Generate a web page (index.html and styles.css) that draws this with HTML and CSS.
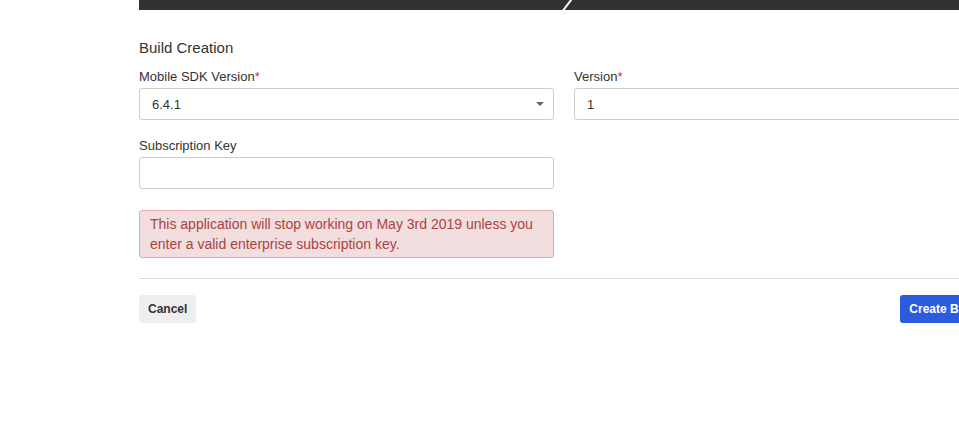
FILE: index.html
```html
<!DOCTYPE html>
<html lang="en">
<head>
<meta charset="utf-8">
<title>Build Creation</title>
<link rel="stylesheet" href="styles.css">
</head>
<body>
<div class="page">
  <div class="topbar">
    <svg class="slash" width="12" height="10" viewBox="0 0 12 10"><line x1="1" y1="10.5" x2="9.5" y2="-0.5" stroke="#ffffff" stroke-width="2"/></svg>
  </div>
  <h2 class="title">Build Creation</h2>
  <div class="grid">
    <div class="field">
      <label class="label">Mobile SDK Version<span class="req">*</span></label>
      <div class="select">
        <span>6.4.1</span>
        <svg class="caret" width="8" height="4" viewBox="0 0 8 4"><path d="M0 0 H8 L4 4 Z" fill="#666"/></svg>
      </div>
    </div>
    <div class="field">
      <label class="label">Version<span class="req">*</span></label>
      <input class="input" type="text" value="1">
    </div>
    <div class="field">
      <label class="label">Subscription Key</label>
      <input class="input" type="text" value="">
    </div>
    <div class="field"></div>
  </div>
  <div class="grid">
    <div class="alert">This application will stop working on May 3rd 2019 unless you enter a valid enterprise subscription key.</div>
  </div>
  <hr class="rule">
  <div class="actions">
    <button class="btn btn-default" type="button">Cancel</button>
    <button class="btn btn-primary" type="button">Create Build</button>
  </div>
</div>
</body>
</html>
```
FILE: styles.css
```css
html, body {
  margin: 0;
  padding: 0;
  overflow: hidden;
  background: #ffffff;
}
body {
  font-family: "Liberation Sans", Arial, sans-serif;
  color: #333333;
}
.page {
  width: 850px;
  margin-left: 139px;
}
.topbar {
  height: 10px;
  background: #313131;
  padding-left: 423px;
  display: flex;
  align-items: flex-start;
}
.slash {
  display: block;
}
.title {
  margin: 28px 0 0 0;
  font-size: 15px;
  font-weight: normal;
  line-height: 20px;
  color: #333333;
}
.grid {
  display: grid;
  grid-template-columns: 415px 415px;
  column-gap: 20px;
  row-gap: 17px;
  margin-top: 10px;
}
.field {
  display: flex;
  flex-direction: column;
}
.label {
  font-size: 13px;
  line-height: 18px;
  margin-bottom: 2px;
  color: #333333;
}
.req {
  color: #e3263f;
}
.select, .input {
  box-sizing: border-box;
  height: 32px;
  border: 1px solid #cccccc;
  border-radius: 3px;
  background: #ffffff;
  font-family: "Liberation Sans", Arial, sans-serif;
  font-size: 13px;
  color: #333333;
  padding: 0 12px;
  margin: 0;
  width: 100%;
  outline: none;
}
.select {
  display: flex;
  align-items: center;
  justify-content: space-between;
  padding-right: 9px;
}
.caret {
  display: block;
}
.alert {
  margin-top: 11px;
  box-sizing: border-box;
  border: 1px solid #e4a9ae;
  background: #f2dede;
  color: #a94442;
  border-radius: 3px;
  padding: 3px 10px;
  font-size: 14px;
  line-height: 20px;
}
.rule {
  margin: 20px 0 0 0;
  border: 0;
  border-top: 1px solid #dddddd;
  height: 0;
}
.actions {
  display: flex;
  justify-content: space-between;
  margin-top: 16px;
}
.btn {
  height: 28px;
  border: 0;
  border-radius: 3px;
  padding: 0 9px;
  font-family: "Liberation Sans", Arial, sans-serif;
  font-size: 12px;
  font-weight: bold;
  line-height: 28px;
  cursor: pointer;
}
.btn-default {
  background: #eeeeee;
  color: #333333;
}
.btn-primary {
  background: #2b5ce0;
  color: #ffffff;
}
```
